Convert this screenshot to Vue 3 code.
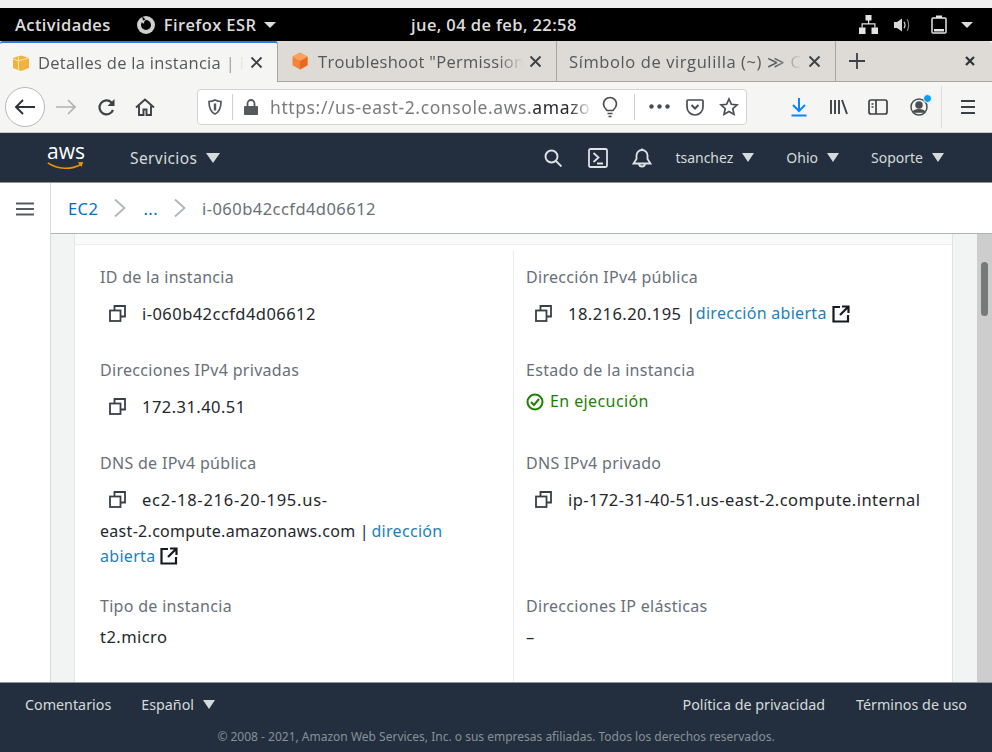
<template>
  <div class="screen">
    <div class="top-gap"></div>

    <div class="gnome-bar">
      <div class="gnome-left">
        <span class="activities">Actividades</span>
        <span class="app-menu">
          <svg viewBox="0 0 20 20" width="20" height="20">
            <circle cx="10" cy="10" r="9" fill="#cfcfcf" />
            <path d="M10 5a5 5 0 1 1-5 5c0-1.100.4-2.200 1.100-3.100 0 1.100 1.100 1.800 2.200 1.400-.6-.9-.2-2.400 1.700-3.300z" fill="#000" />
            <path d="M6 1l3.500 3.500-2.500 1z" fill="#000" />
          </svg>
          Firefox ESR
          <span class="gnome-caret"></span>
        </span>
      </div>
      <span class="gnome-clock">jue, 04 de feb, 22:58</span>
      <span class="gnome-status">
        <svg class="st-net" viewBox="0 0 19 19" width="19" height="19" fill="#e4e4e4">
          <rect x="6.500" y="0" width="6" height="5.500" />
          <rect x="0" y="12.500" width="6.500" height="6.500" />
          <rect x="12.500" y="12.500" width="6.500" height="6.500" />
          <path d="M9 5h1.200v3.200H16.500v4.500h-1.200V9.400H3.700v3.300H2.500V8.200H9z" />
        </svg>
        <svg class="st-vol" viewBox="0 0 18 16" width="18" height="16" fill="#d8d8d8">
          <path d="M0 5h3L8 1.500v13L3 11H0z" />
          <path d="M9.500 5c1.200 1.600 1.200 4.400 0 6l1 .6c1.500-2 1.500-5.200 0-7.200z" />
          <path d="M12.500 2.500c2 2.800 2 8.200 0 11l1 .6c2.300-3.200 2.300-9 0-12.200z" opacity=".6" />
        </svg>
        <svg class="st-bat" viewBox="0 0 16 19" width="16" height="19" fill="none">
          <rect x="1" y="3" width="14" height="15" rx="1" stroke="#e4e4e4" stroke-width="1.500" />
          <rect x="5" y="0.500" width="6" height="2.500" fill="#e4e4e4" />
          <rect x="3" y="14" width="10" height="2.500" fill="#e4e4e4" />
        </svg>
        <span class="gnome-caret st-caret"></span>
      </span>
    </div>

    <div class="tab-strip">
      <div class="tab tab-active">
        <svg class="favicon" viewBox="0 0 18 18" width="18" height="18">
          <path d="M1 4 9 1.500 17 4v10L9 17 1 14z" fill="#f3b23e" />
          <path d="M6.500 3v13.500M1 5l5.500 1.800L17 4" stroke="#fbe3ae" stroke-width="1" fill="none" />
        </svg>
        <span class="tab-title">Detalles de la instancia | EC2 Management Console</span>
        <svg class="tab-close" viewBox="0 0 13 13" width="13" height="13"><path d="M1.500 1.500l10 10M11.500 1.500l-10 10" stroke="#3d4145" stroke-width="1.900" /></svg>
      </div>
      <div class="tab tab-second">
        <svg class="favicon" viewBox="0 0 18 18" width="18" height="18">
          <path d="M9 .5l7.500 4.300v8.400L9 17.500l-7.500-4.300V4.800z" fill="#f58536" />
          <path d="M9 9v8.500l7.500-4.300V4.800z" fill="#e8691b" />
          <path d="M9 .5l7.500 4.300L9 9 1.500 4.800z" fill="#f9a05b" />
        </svg>
        <span class="tab-title">Troubleshoot "Permission denied"</span>
        <svg class="tab-close" viewBox="0 0 13 13" width="13" height="13"><path d="M1.500 1.500l10 10M11.500 1.500l-10 10" stroke="#3d4145" stroke-width="1.900" /></svg>
      </div>
      <div class="tab tab-third">
        <span class="tab-title">Símbolo de virgulilla (~) ≫ Cómo escribir</span>
        <svg class="tab-close" viewBox="0 0 13 13" width="13" height="13"><path d="M1.500 1.500l10 10M11.500 1.500l-10 10" stroke="#3d4145" stroke-width="1.900" /></svg>
      </div>
      <div class="new-tab">
        <svg viewBox="0 0 18 18" width="18" height="18"><path d="M9 1v16M1 9h16" stroke="#3d4145" stroke-width="1.800" /></svg>
      </div>
      <svg class="window-close" viewBox="0 0 10 10" width="10" height="10"><path d="M1 1l8 8M9 1 1 9" stroke="#2f3236" stroke-width="2.200" /></svg>
    </div>

    <div class="toolbar">
      <div class="back-btn">
        <svg viewBox="0 0 24 24" width="24" height="24" fill="none" stroke="#2f3236" stroke-width="1.900">
          <path d="M22 12H3M10 5l-7 7 7 7" />
        </svg>
      </div>
      <svg class="tool-forward" viewBox="0 0 24 24" width="24" height="24" fill="none" stroke="#b1b2b3" stroke-width="1.700">
        <path d="M2 12h19M14 5l7 7-7 7" />
      </svg>
      <svg class="tool-reload" viewBox="0 0 20 20" width="20" height="20" fill="none" stroke="#3d4145" stroke-width="2.200">
        <path d="M17 13a7 7 0 1 1-1.500-7.500L17 7" />
        <path d="M18.500 2v7h-7z" fill="#3d4145" stroke="none" />
      </svg>
      <svg class="tool-home" viewBox="0 0 20 20" width="20" height="20" fill="none" stroke="#3d4145" stroke-width="1.900">
        <path d="M1 10.500 10 2.500l9 8" />
        <path d="M4 8.500v9.500h4.500v-5.500h3V18H16V8.500" />
      </svg>
      <div class="url-box">
        <svg class="u-shield" viewBox="0 0 18 18" width="18" height="18" fill="none" stroke="#55585c" stroke-width="1.700">
          <path d="M9 2c2 1 4 1.500 6 1.500 0 6-1.500 10.500-6 12.500C4.500 14 3 9.500 3 3.500 5 3.500 7 3 9 2z" />
          <path d="M9 5.500v7" stroke-width="2.400" />
        </svg>
        <span class="url-sep"></span>
        <svg class="u-lock" viewBox="0 0 16 18" width="16" height="18" fill="#55585c">
          <path d="M2 8h12a1 1 0 0 1 1 1v7a1 1 0 0 1-1 1H2a1 1 0 0 1-1-1V9a1 1 0 0 1 1-1z" />
          <path d="M4.500 8V5.500a3.500 3.500 0 0 1 7 0V8" fill="none" stroke="#55585c" stroke-width="1.800" />
        </svg>
        <span class="url-text">https://us-east-2.console.aws.<b>amazonaws.com</b></span>
        <svg class="u-bulb" viewBox="0 0 18 22" width="18" height="22" fill="none" stroke="#4a4d51" stroke-width="1.700">
          <path d="M6 14.500C4.500 13 2.500 11.200 2.500 8a6.500 6.500 0 0 1 13 0c0 3.200-2 5-3.500 6.500z" />
          <path d="M6.500 17.500h5M7.500 20.500h3" />
        </svg>
        <span class="url-sep u-sep2"></span>
        <svg class="u-dots" viewBox="0 0 21 5" width="21" height="5" fill="#4a4d51">
          <circle cx="2.500" cy="2.500" r="2.200" /><circle cx="10.500" cy="2.500" r="2.200" /><circle cx="18.500" cy="2.500" r="2.200" />
        </svg>
        <svg class="u-pocket" viewBox="0 0 20 20" width="20" height="20" fill="none" stroke="#4a4d51" stroke-width="1.700">
          <path d="M3 3h14a1 1 0 0 1 1 1v6a8 8 0 0 1-16 0V4a1 1 0 0 1 1-1z" />
          <path d="M6.500 8 10 11.500 13.500 8" stroke-width="2" />
        </svg>
        <svg class="u-star" viewBox="0 0 20 20" width="20" height="20" fill="none" stroke="#4a4d51" stroke-width="1.700">
          <path d="M10 2l2.400 5.300 5.600.6-4.200 3.800 1.200 5.700-5-2.900-5 2.900 1.200-5.700L2 7.900l5.600-.6z" />
        </svg>
      </div>
      <svg class="tool-download" viewBox="0 0 18 20" width="18" height="20" fill="none" stroke="#0a84ff" stroke-width="2">
        <path d="M9 1v13M3 8l6 6 6-6M1.500 18.500h15" />
      </svg>
      <svg class="tool-lib" viewBox="0 0 20 18" width="20" height="18" fill="none" stroke="#3d4145" stroke-width="1.900">
        <path d="M2 2v14M6 2v14M10 2v14M13 2l5 14" />
      </svg>
      <svg class="tool-side" viewBox="0 0 20 18" width="20" height="18" fill="none" stroke="#3d4145" stroke-width="1.700">
        <rect x="1" y="2" width="18" height="14" rx="2" />
        <path d="M8 2v14M3.500 6h2M3.500 9h2" />
      </svg>
      <div class="tool-account">
        <svg viewBox="0 0 20 20" width="20" height="20" fill="none" stroke="#4a4d51" stroke-width="1.500">
          <circle cx="10" cy="10" r="8" />
          <circle cx="10" cy="8" r="3" fill="#4a4d51" />
          <path d="M4.500 15c1-3 10-3 11 0z" fill="#4a4d51" />
        </svg>
        <span class="account-dot"></span>
      </div>
      <span class="tool-sep"></span>
      <svg class="tool-menu" viewBox="0 0 18 16" width="18" height="16" fill="none" stroke="#3d4145" stroke-width="1.800">
        <path d="M2 2h14M2 8h14M2 14h14" />
      </svg>
    </div>

    <header class="aws-nav">
      <div class="aws-logo">
        <span class="aws-word">aws</span>
        <svg viewBox="0 0 42 11" width="42" height="11" fill="none">
          <path d="M1 2c11 7.500 25 8 37 1.500" stroke="#f29100" stroke-width="1.800" />
          <path d="M34 1.500l6-.5-2 5.500z" fill="#f29100" />
        </svg>
      </div>
      <span class="nav-services">Servicios <i class="nav-caret caret-big"></i></span>
      <div class="nav-right">
        <svg class="ic-search" viewBox="0 0 18 18" width="18" height="18" fill="none" stroke="#e0e2e4" stroke-width="1.900">
          <circle cx="7.500" cy="7.500" r="6" />
          <path d="M12 12l5.500 5.500" />
        </svg>
        <svg class="ic-term" viewBox="0 0 20 20" width="20" height="20" fill="none" stroke="#e0e2e4" stroke-width="1.800">
          <rect x="1" y="1" width="18" height="18" rx="1.500" />
          <path d="M5.500 5l5 4.500-5 4.500M9 15.500h6" />
        </svg>
        <svg class="ic-bell" viewBox="0 0 20 20" width="20" height="20" fill="none" stroke="#e0e2e4" stroke-width="1.800">
          <path d="M1.500 15.500h17L15.500 11V7.500a5.500 5.500 0 0 0-11 0V11z" />
          <path d="M7 15.500a3 3 0 0 0 6 0M10 .5v1.500" />
        </svg>
        <span class="nav-link nav-user">tsanchez <i class="nav-caret"></i></span>
        <span class="nav-link">Ohio <i class="nav-caret"></i></span>
        <span class="nav-link">Soporte <i class="nav-caret"></i></span>
      </div>
    </header>

    <div class="workspace">
      <aside class="side-rail">
        <svg viewBox="0 0 18 14" width="18" height="14" fill="none" stroke="#545b64" stroke-width="2">
          <path d="M0 1.500h18M0 7h18M0 12.500h18" />
        </svg>
      </aside>

      <div class="main-area">
        <nav class="crumbs">
          <a>EC2</a>
          <svg viewBox="0 0 12 20" width="12" height="20" fill="none" stroke="#aab7b8" stroke-width="1.700"><path d="M1 1.500l9.500 8.500L1 18.500" /></svg>
          <a>...</a>
          <svg class="crumb-last" viewBox="0 0 12 20" width="12" height="20" fill="none" stroke="#aab7b8" stroke-width="1.700"><path d="M1 1.500l9.500 8.500L1 18.500" /></svg>
          <span>i-060b42ccfd4d06612</span>
        </nav>

        <div class="scroll-row">
          <div class="page">
            <div class="card">
              <div class="card-top"></div>
              <div class="detail-grid">
                <div class="col">
                  <section class="field f-std">
                    <div class="label">ID de la instancia</div>
                    <div class="value copyable">
                      <svg class="copy" viewBox="0 0 17 17" width="17" height="17" fill="none" stroke="#3a3f47" stroke-width="1.800">
                        <rect x="1" y="5.500" width="10.500" height="10.500" />
                        <path d="M5.500 5.500V1H16v10.500h-4.500" />
                      </svg>
                      <span>i-060b42ccfd4d06612</span>
                    </div>
                  </section>
                  <section class="field f-std">
                    <div class="label">Direcciones IPv4 privadas</div>
                    <div class="value copyable">
                      <svg class="copy" viewBox="0 0 17 17" width="17" height="17" fill="none" stroke="#3a3f47" stroke-width="1.800">
                        <rect x="1" y="5.500" width="10.500" height="10.500" />
                        <path d="M5.500 5.500V1H16v10.500h-4.500" />
                      </svg>
                      <span>172.31.40.51</span>
                    </div>
                  </section>
                  <section class="field f-tall">
                    <div class="label">DNS de IPv4 pública</div>
                    <div class="value copyable value-digits">
                      <svg class="copy" viewBox="0 0 17 17" width="17" height="17" fill="none" stroke="#3a3f47" stroke-width="1.800">
                        <rect x="1" y="5.500" width="10.500" height="10.500" />
                        <path d="M5.500 5.500V1H16v10.500h-4.500" />
                      </svg>
                      <span>ec2-18-216-20-195.us-</span>
                    </div>
                    <div class="value-rest">
                      east-2.compute.amazonaws.com | <a>dirección abierta</a>
                      <svg class="ext" viewBox="0 0 18 18" width="18" height="18" fill="none" stroke="#16191f" stroke-width="2.200">
                        <path d="M8 2H1.500v14.500H16V10M10 1.500h6.500V8M16 2 8 10" />
                      </svg>
                    </div>
                  </section>
                  <section class="field f-short">
                    <div class="label label-near">Tipo de instancia</div>
                    <div class="value">t2.micro</div>
                  </section>
                  <section class="field">
                    <div class="label">Red</div>
                  </section>
                </div>

                <div class="col col-right">
                  <section class="field f-std">
                    <div class="label">Dirección IPv4 pública</div>
                    <div class="value copyable">
                      <svg class="copy" viewBox="0 0 17 17" width="17" height="17" fill="none" stroke="#3a3f47" stroke-width="1.800">
                        <rect x="1" y="5.500" width="10.500" height="10.500" />
                        <path d="M5.500 5.500V1H16v10.500h-4.500" />
                      </svg>
                      <span>18.216.20.195 |</span>
                      <a class="ip-link">dirección abierta</a>
                      <svg class="ext" viewBox="0 0 18 18" width="18" height="18" fill="none" stroke="#16191f" stroke-width="2.200">
                        <path d="M8 2H1.500v14.500H16V10M10 1.500h6.500V8M16 2 8 10" />
                      </svg>
                    </div>
                  </section>
                  <section class="field f-std">
                    <div class="label label-near">Estado de la instancia</div>
                    <div class="state">
                      <svg viewBox="0 0 18 18" width="18" height="18" fill="none" stroke="#1d8102" stroke-width="2">
                        <circle cx="9" cy="9" r="7.500" />
                        <path d="M5 9l3 3 5-6" />
                      </svg>
                      En ejecución
                    </div>
                  </section>
                  <section class="field f-tall">
                    <div class="label">DNS IPv4 privado</div>
                    <div class="value copyable">
                      <svg class="copy" viewBox="0 0 17 17" width="17" height="17" fill="none" stroke="#3a3f47" stroke-width="1.800">
                        <rect x="1" y="5.500" width="10.500" height="10.500" />
                        <path d="M5.500 5.500V1H16v10.500h-4.500" />
                      </svg>
                      <span>ip-172-31-40-51.us-east-2.compute.internal</span>
                    </div>
                  </section>
                  <section class="field f-short">
                    <div class="label label-near">Direcciones IP elásticas</div>
                    <div class="value">–</div>
                  </section>
                  <section class="field">
                    <div class="label">Hallazgos de AWS Compute Optimizer</div>
                  </section>
                </div>
              </div>
            </div>
          </div>
          <div class="scrollbar"><div class="thumb"></div></div>
        </div>
      </div>
    </div>

    <footer class="aws-foot">
      <div class="foot-row">
        <span>Comentarios</span>
        <span class="foot-lang">Español <i class="nav-caret"></i></span>
        <span class="foot-right">Política de privacidad</span>
        <span class="foot-terms">Términos de uso</span>
      </div>
      <div class="copyright">© 2008 - 2021, Amazon Web Services, Inc. o sus empresas afiliadas. Todos los derechos reservados.</div>
    </footer>
  </div>
</template>

<script setup>
</script>

<style>
html, body { margin: 0; overflow: hidden; background: #f0f0f0; }
</style>

<style scoped>
.screen {
  width: 992px;
  height: 752px;
  display: flex;
  flex-direction: column;
  overflow: hidden;
  font-family: "Noto Sans", sans-serif;
  background: #fff;
}
.top-gap { height: 8px; background: #f0f0f0; flex: none; }

.gnome-bar {
  height: 33px;
  flex: none;
  background: #000;
  color: #dcdcdc;
  display: flex;
  align-items: center;
  font-family: "Open Sans", sans-serif;
  font-size: 16.500px;
  font-weight: 600;
  letter-spacing: 0.4px;
  padding: 0 19px 0 15px;
  white-space: nowrap;
}
.gnome-left { width: 396px; flex: none; display: flex; align-items: center; }
.activities { margin-right: 25px; }
.app-menu { display: flex; align-items: center; gap: 8px; }
.gnome-caret {
  width: 0;
  height: 0;
  border-left: 6px solid transparent;
  border-right: 6px solid transparent;
  border-top: 6px solid #dcdcdc;
}
.gnome-status { margin-left: auto; display: flex; align-items: center; }
.st-vol { margin-left: 16px; }
.st-bat { margin-left: 19px; }
.st-caret { margin-left: 14px; }

.tab-strip {
  height: 41px;
  flex: none;
  background: #dedad5;
  display: flex;
  align-items: stretch;
  border-bottom: 1px solid #aaa69f;
  border-top-right-radius: 4px;
  box-sizing: border-box;
  color: #54575a;
  font-family: "Open Sans", sans-serif;
  font-size: 16.500px;
  letter-spacing: 0.3px;
}
.tab {
  width: 279px;
  display: flex;
  align-items: center;
  box-sizing: border-box;
  border-right: 1px solid #a9a6a1;
  padding: 0 14px 0 12px;
  min-width: 0;
  flex: none;
}
.tab-active {
  width: 278px;
  background: #f5f5f4;
  border-top: 2px solid #2c7cd6;
  margin-bottom: -1px;
  border-radius: 3px 3px 0 0;
}
.favicon { flex: none; margin-right: 8px; }
.tab-second { padding-left: 13px; }
.tab-second .favicon { margin-right: 9px; }
.tab-third { letter-spacing: 0.6px; }
.tab-title {
  flex: 1;
  min-width: 0;
  overflow: hidden;
  white-space: nowrap;
  -webkit-mask-image: linear-gradient(90deg, #000 88%, transparent 100%);
  mask-image: linear-gradient(90deg, #000 88%, transparent 100%);
}
.tab-close { flex: none; margin-left: 6px; }
.new-tab { width: 42px; display: flex; align-items: center; justify-content: center; }
.window-close { margin-left: auto; margin-right: 17px; align-self: center; }

.toolbar {
  height: 51px;
  flex: none;
  background: #f5f5f4;
  display: flex;
  align-items: center;
  box-sizing: border-box;
  padding-left: 5px;
  padding-bottom: 1px;
  border-bottom: 1px solid #c9c7c4;
}
.toolbar > svg { flex: none; }
.back-btn {
  width: 40px;
  height: 40px;
  box-sizing: border-box;
  border: 1px solid #b8b8b8;
  border-radius: 50%;
  background: #fff;
  display: flex;
  align-items: center;
  justify-content: center;
  flex: none;
}
.tool-forward { margin-left: 9px; }
.tool-reload { margin-left: 18px; }
.tool-home { margin-left: 19px; }
.url-box {
  width: 550px;
  height: 36px;
  margin-left: 42px;
  box-sizing: border-box;
  background: #fff;
  border: 1px solid #d4d3d1;
  border-radius: 4px;
  display: flex;
  align-items: center;
  padding-left: 8px;
  flex: none;
}
.url-box svg { flex: none; }
.url-sep { width: 1px; height: 26px; background: #cfcfcf; margin-left: 8px; flex: none; }
.u-lock { margin-left: 10px; }
.url-text {
  width: 322px;
  flex: none;
  margin-left: 11px;
  font-size: 17.500px;
  letter-spacing: 0.6px;
  color: #7a7b7d;
  white-space: nowrap;
  overflow: hidden;
  -webkit-mask-image: linear-gradient(90deg, #000 93%, transparent 100%);
  mask-image: linear-gradient(90deg, #000 93%, transparent 100%);
}
.url-text b { font-weight: 400; color: #2a2a2e; }
.u-bulb { margin-left: 9px; }
.u-sep2 { margin-left: 15px; }
.u-dots { margin-left: 14px; }
.u-pocket { margin-left: 15px; }
.u-star { margin-left: 14px; }
.tool-download { margin-left: 43px; }
.tool-lib { margin-left: 21px; }
.tool-side { margin-left: 19px; }
.tool-account { margin-left: 21px; position: relative; width: 20px; height: 20px; flex: none; }
.account-dot {
  position: absolute;
  right: -3px;
  top: -3px;
  width: 7px;
  height: 7px;
  border-radius: 50%;
  background: #0a9bf5;
  border: 1px solid #f5f5f4;
}
.tool-sep { width: 1px; height: 42px; background: #dcdbd9; margin-left: 12px; flex: none; }
.tool-menu { margin-left: 17px; }

.aws-nav {
  height: 50px;
  flex: none;
  background: #232f3e;
  border-bottom: 1px solid #8d949c;
  box-sizing: border-box;
  display: flex;
  align-items: center;
  padding-left: 45px;
  color: #d5dbdb;
  font-size: 14px;
}
.aws-logo { display: flex; flex-direction: column; width: 42px; height: 30px; margin-top: -4px; }
.aws-word { color: #fff; font-size: 21px; line-height: 20px; text-align: center; font-family: "Open Sans", sans-serif; }
.nav-link { white-space: nowrap; display: inline-flex; align-items: center; margin-left: 32px; }
.nav-caret {
  display: inline-block;
  width: 0;
  height: 0;
  border-left: 6px solid transparent;
  border-right: 6px solid transparent;
  border-top: 9px solid #d5dbdb;
  margin-left: 9px;
}
.caret-big { border-left-width: 7px; border-right-width: 7px; border-top-width: 10px; }
.nav-services { margin-left: 43px; font-size: 15.500px; letter-spacing: 0.4px; display: inline-flex; align-items: center; }
.nav-right { margin-left: auto; display: flex; align-items: center; padding-right: 48px; }
.ic-term { margin-left: 26px; }
.ic-bell { margin-left: 24px; }
.nav-user { margin-left: 23px; }

.workspace { flex: 1; display: flex; min-height: 0; }
.side-rail {
  width: 51px;
  flex: none;
  box-sizing: border-box;
  border-right: 1px solid #d5dbdb;
  padding: 19px 0 0 16px;
}
.side-rail svg { display: block; }
.main-area { flex: 1; display: flex; flex-direction: column; min-width: 0; }
.crumbs {
  height: 51px;
  flex: none;
  box-sizing: border-box;
  display: flex;
  align-items: center;
  padding-left: 17px;
  font-size: 16.500px;
  letter-spacing: 0.45px;
  color: #687078;
  border-bottom: 1px solid #aab7b8;
}
.crumbs a { color: #0073bb; }
.crumbs svg { margin: 0 17px 0 16px; }
.crumbs .crumb-last { margin-right: 16px; }

.scroll-row { flex: 1; display: flex; min-height: 0; }
.page { flex: 1; background: #f2f3f3; padding: 0 24px 0 23px; overflow: hidden; min-width: 0; }
.card { background: #fff; min-height: 100%; box-sizing: border-box; border-left: 1px solid #e4e6e6; border-right: 1px solid #dfe2e2; }
.card-top { height: 10px; background: #fafafa; border-bottom: 1px solid #eaeded; }
.detail-grid { display: grid; grid-template-columns: 438px 1fr; padding-top: 6px; }
.col { padding: 16px 0 0 25px; }
.col-right { border-left: 1px solid #eaeded; padding-left: 12px; }

.field { line-height: 21px; }
.f-std { height: 93px; }
.f-tall { height: 143px; }
.f-short { height: 84px; }
.label { color: #687078; font-size: 16px; letter-spacing: 0.3px; margin-bottom: 15px; white-space: nowrap; }
.label-near { margin-bottom: 10px; }
.f-short .label-near { margin-bottom: 9px; }
.value { color: #24272c; font-size: 16.500px; letter-spacing: 0.45px; }
.value-digits { letter-spacing: 0.75px; }
.copyable { display: flex; align-items: center; padding-left: 9px; white-space: nowrap; }
.copy { flex: none; margin-right: 16px; }
.value-rest { margin-top: 9px; width: 380px; line-height: 25px; color: #24272c; font-size: 16px; letter-spacing: 0.3px; }
.value a, .value-rest a { color: #1b7fc0; }
.value-rest a { margin-left: -2px; }
.ip-link { font-size: 16px; letter-spacing: 0.3px; margin-left: 0; }
.ext { vertical-align: -3px; margin-left: 5px; flex: none; }
.state { display: flex; align-items: center; gap: 6px; color: #1d8102; font-size: 16px; letter-spacing: 0.4px; }

.scrollbar { width: 15px; flex: none; background: #cdcdcd; padding-top: 28px; box-sizing: border-box; }
.thumb {
  width: 7px;
  height: 54px;
  margin-left: 4px;
  border-radius: 4px;
  background: #77797b;
}

.aws-foot {
  height: 70px;
  flex: none;
  background: #232f3e;
  border-top: 1px solid #8d949c;
  box-sizing: border-box;
  color: #d5dbdb;
}
.foot-row {
  display: flex;
  align-items: center;
  height: 43px;
  font-size: 14.300px;
  padding: 0 25px;
}
.foot-lang { margin-left: 30px; display: inline-flex; align-items: center; }
.foot-right { margin-left: auto; }
.foot-terms { margin-left: 31px; }
.copyright { text-align: center; font-size: 12px; color: #879196; line-height: 16px; padding-top: 3px; }
</style>
